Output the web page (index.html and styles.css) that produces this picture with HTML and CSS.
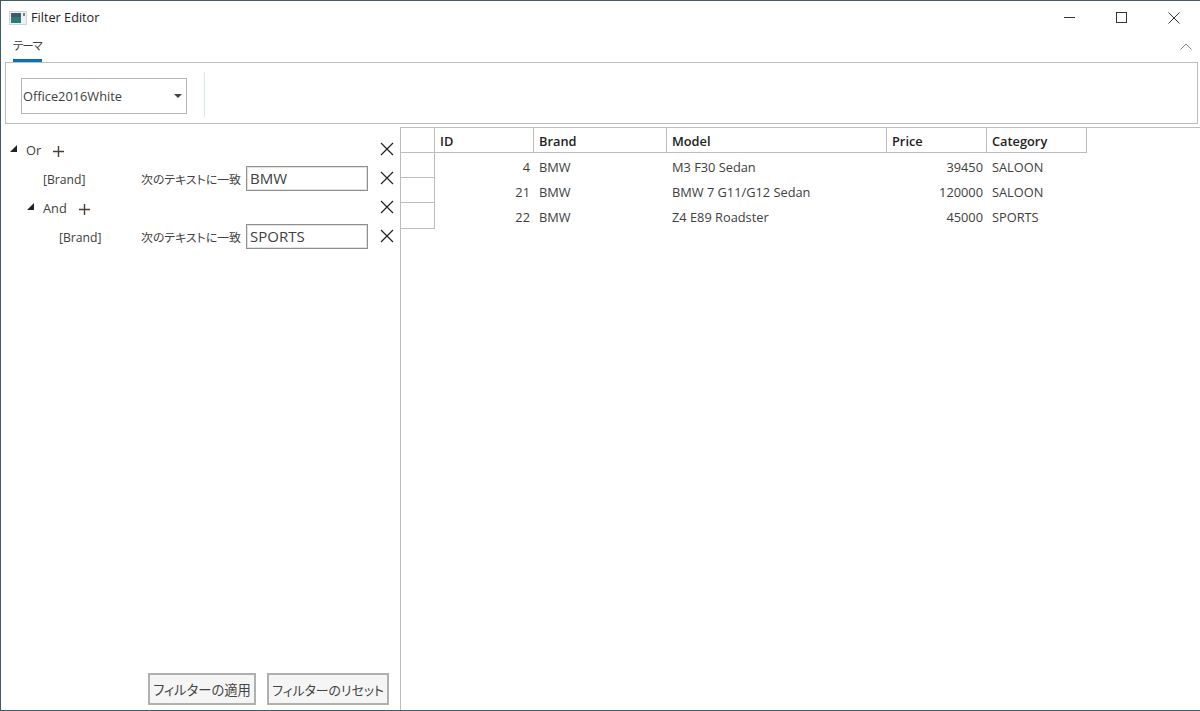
FILE: index.html
```html
<!DOCTYPE html>
<html lang="ja">

<head>
  <meta charset="UTF-8">
  <title>Filter Editor</title>
  <link rel="stylesheet" href="styles.css">
</head>

<body>
  <div class="window">
    <div class="titlebar">
      <svg class="app-icon" width="18" height="14" viewBox="0 0 18 14">
        <rect x="0.5" y="0.5" width="17" height="13" fill="#eef1f1" stroke="#cfd3d3"/>
        <rect x="2" y="2" width="10" height="10" fill="#2f7a74"/>
        <rect x="2" y="2" width="10" height="4" fill="#3c5a70"/>
        <rect x="14" y="2" width="2" height="3" fill="#6b8490"/>
      </svg>
      <span class="title">Filter Editor</span>
      <div class="window-btns">
        <svg class="win-btn" width="12" height="12" viewBox="0 0 12 12"><path d="M0 5.5H11" stroke="#333" fill="none"/></svg>
        <svg class="win-btn" width="12" height="12" viewBox="0 0 12 12"><rect x="0.5" y="0.5" width="10" height="10" stroke="#333" fill="none"/></svg>
        <svg class="win-btn" width="12" height="12" viewBox="0 0 12 12"><path d="M0.5 0.5L11.5 11.5M11.5 0.5L0.5 11.5" stroke="#333" fill="none"/></svg>
      </div>
    </div>

    <div class="tabs">
      <span class="tab">テーマ</span>
      <svg class="collapse" width="12" height="7" viewBox="0 0 12 7"><path d="M0.5 6.5L6 1L11.5 6.5" stroke="#888" fill="none"/></svg>
    </div>

    <div class="ribbon">
      <div class="ribbon-group">
        <div class="combo">
          <span>Office2016White</span>
          <span class="combo-arrow"></span>
        </div>
      </div>
    </div>

    <div class="main">
      <div class="filter-panel">
        <div class="filter-tree">
          <div class="filter-row">
            <span class="expander"></span>
            <span class="op">Or</span>
            <span class="add">
              <svg width="11" height="11" viewBox="0 0 11 11"><path d="M5.5 0V11M0 5.5H11" stroke="#4a4038" stroke-width="1.4" fill="none"/></svg>
            </span>
            <span class="remove">
              <svg width="14" height="14" viewBox="0 0 14 14"><path d="M1 1L13 13M13 1L1 13" stroke="#222" stroke-width="1.2" fill="none"/></svg>
            </span>
          </div>
          <div class="filter-row indent-1">
            <span class="field">[Brand]</span>
            <span class="condition">次のテキストに一致</span>
            <span class="value">BMW</span>
            <span class="remove">
              <svg width="14" height="14" viewBox="0 0 14 14"><path d="M1 1L13 13M13 1L1 13" stroke="#222" stroke-width="1.2" fill="none"/></svg>
            </span>
          </div>
          <div class="filter-row indent-2">
            <span class="expander"></span>
            <span class="op">And</span>
            <span class="add">
              <svg width="11" height="11" viewBox="0 0 11 11"><path d="M5.5 0V11M0 5.5H11" stroke="#4a4038" stroke-width="1.4" fill="none"/></svg>
            </span>
            <span class="remove">
              <svg width="14" height="14" viewBox="0 0 14 14"><path d="M1 1L13 13M13 1L1 13" stroke="#222" stroke-width="1.2" fill="none"/></svg>
            </span>
          </div>
          <div class="filter-row indent-3">
            <span class="field">[Brand]</span>
            <span class="condition">次のテキストに一致</span>
            <span class="value">SPORTS</span>
            <span class="remove">
              <svg width="14" height="14" viewBox="0 0 14 14"><path d="M1 1L13 13M13 1L1 13" stroke="#222" stroke-width="1.2" fill="none"/></svg>
            </span>
          </div>
        </div>
        <div class="filter-actions">
          <button class="btn btn-apply">フィルターの適用</button>
          <button class="btn btn-reset">フィルターのリセット</button>
        </div>
      </div>

      <div class="grid-panel">
        <div class="data-grid">
          <div class="head corner"></div>
          <div class="head">ID</div>
          <div class="head">Brand</div>
          <div class="head">Model</div>
          <div class="head">Price</div>
          <div class="head">Category</div>

          <div class="row-head"></div>
          <div class="cell num">4</div>
          <div class="cell">BMW</div>
          <div class="cell">M3 F30 Sedan</div>
          <div class="cell num">39450</div>
          <div class="cell">SALOON</div>

          <div class="row-head"></div>
          <div class="cell num">21</div>
          <div class="cell">BMW</div>
          <div class="cell">BMW 7 G11/G12 Sedan</div>
          <div class="cell num">120000</div>
          <div class="cell">SALOON</div>

          <div class="row-head"></div>
          <div class="cell num">22</div>
          <div class="cell">BMW</div>
          <div class="cell">Z4 E89 Roadster</div>
          <div class="cell num">45000</div>
          <div class="cell">SPORTS</div>
        </div>
      </div>
    </div>
  </div>
</body>

</html>
```

FILE: styles.css
```css
* {
  margin: 0;
  padding: 0;
  box-sizing: border-box;
}

body {
  width: 1200px;
  height: 711px;
  overflow: hidden;
  background-color: #fff;
  font-family: "Open Sans", "Noto Sans CJK JP", sans-serif;
  font-size: 12.8px;
  font-feature-settings: "palt";
  color: #404040;
}

.window {
  display: flex;
  flex-direction: column;
  height: 100%;
  border: 1px solid #3e5a6c;
  border-right: none;
}

.titlebar {
  display: flex;
  align-items: center;
  height: 33px;
  padding-left: 8px;
  flex-shrink: 0;
}

.app-icon {
  margin-right: 4px;
}

.title {
  margin-top: -1px;
  font-size: 12.7px;
  color: #222;
}

.window-btns {
  display: flex;
  gap: 40px;
  margin-left: auto;
  padding-right: 20px;
}

.tabs {
  display: flex;
  align-items: flex-start;
  justify-content: space-between;
  height: 28px;
  padding: 2px 8px 0 12px;
  flex-shrink: 0;
}

.tab {
  display: block;
  height: 26px;
  width: 29px;
  line-height: 20px;
  font-size: 11.5px;
  letter-spacing: -1.2px;
  white-space: nowrap;
  border-bottom: 3px solid #0072c6;
}

.collapse {
  margin-top: 7px;
}

.ribbon {
  display: flex;
  align-items: stretch;
  height: 62px;
  margin: 0 2px 0 4px;
  padding: 9px 0 6px;
  border: 1px solid #bdbdbd;
  flex-shrink: 0;
}

.ribbon-group {
  display: flex;
  align-items: flex-start;
  width: 199px;
  padding: 6px 0 0 15px;
  border-right: 1px solid #dbe8e8;
}

.combo {
  display: flex;
  align-items: center;
  justify-content: space-between;
  width: 166px;
  height: 36px;
  padding: 0 4px 0 1px;
  border: 1px solid #b5b5b5;
}

.combo-arrow {
  width: 0;
  height: 0;
  border-left: 4px solid transparent;
  border-right: 4px solid transparent;
  border-top: 4px solid #444;
}

.main {
  display: flex;
  flex: 1;
  min-height: 0;
  margin-top: 3px;
}

.filter-panel {
  display: flex;
  flex-direction: column;
  justify-content: space-between;
  width: 400px;
  padding: 7px 0 5px;
  border-right: 1px solid #bdbdbd;
  flex-shrink: 0;
}

.filter-row {
  display: flex;
  align-items: center;
  height: 29px;
  padding-left: 9px;
}

.indent-1 {
  padding-left: 42px;
}

.indent-2 {
  padding-left: 26px;
}

.indent-3 {
  padding-left: 58px;
}

.expander {
  width: 0;
  height: 0;
  margin-right: 9px;
  border-left: 7px solid transparent;
  border-bottom: 7px solid #222;
}

.op {
  margin: 2px 12px 0 0;
}

.add {
  display: flex;
  margin-top: 6px;
}

.remove {
  display: flex;
  margin-right: 6px;
}

.op + .add + .remove {
  margin-left: auto;
}

.field {
  flex: 1;
  min-width: 0;
  margin-top: 3px;
  font-size: 12.2px;
}

.condition {
  width: 105px;
  margin-top: 2px;
  font-size: 11.9px;
  white-space: nowrap;
}

.value {
  width: 122px;
  height: 25px;
  margin: 2px 12px 0 0;
  padding-left: 3px;
  line-height: 23px;
  font-size: 15px;
  border: 1px solid #8f8f8f;
  box-shadow: inset 0 0 0 1px #e2e2e2;
}

.filter-actions {
  display: flex;
  justify-content: flex-end;
  gap: 11px;
  padding-right: 11px;
}

.btn {
  height: 32px;
  font-family: inherit;
  font-feature-settings: "palt";
  white-space: nowrap;
  color: #444;
  background-color: #f5f5f5;
  border: 2px solid #b0b0b0;
}

.btn-apply {
  width: 108px;
  font-size: 13.3px;
}

.btn-reset {
  width: 122px;
  font-size: 12.9px;
}

.grid-panel {
  flex: 1;
  min-width: 0;
  border-top: 1px solid #bdbdbd;
}

.data-grid {
  display: grid;
  grid-template-columns: 34px 99px 133px 220px 100px 100px;
  grid-template-rows: 25px 25px 25px 26px;
  width: max-content;
}

.head {
  display: flex;
  align-items: center;
  padding: 1px 0 0 5px;
  font-weight: 600;
  color: #222;
  border-right: 1px solid #bdbdbd;
  border-bottom: 1px solid #bdbdbd;
}

.corner {
  padding: 0;
}

.row-head {
  border-right: 1px solid #bdbdbd;
  border-bottom: 1px solid #bdbdbd;
}

.cell {
  padding: 5px 4px 0 5px;
  white-space: nowrap;
}

.num {
  text-align: right;
}
```
